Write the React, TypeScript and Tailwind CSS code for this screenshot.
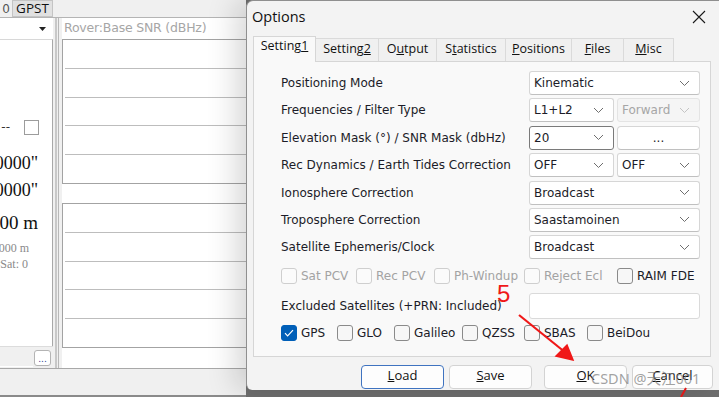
import React from "react";

function Chevron({ light }: { light?: boolean }) {
  return (
    <svg width="11" height="7" viewBox="0 0 11 7" className="shrink-0">
      <path
        d="M1 1l4.5 4.5L10 1"
        fill="none"
        stroke={light ? "#c4c4c4" : "#6e6e6e"}
        strokeWidth="1"
      />
    </svg>
  );
}

function Combo({
  value,
  width,
  disabled,
  focused,
}: {
  value: string;
  width: string;
  disabled?: boolean;
  focused?: boolean;
}) {
  return (
    <div
      className={`${width} h-[24px] flex items-center justify-between pl-[4px] pr-[9px] rounded-[3px] border ${
        disabled
          ? "bg-[#f5f5f5] border-[#e4e4e4] text-[#a6a6a6]"
          : focused
          ? "bg-white border-[#7a7a7a] text-[#1c1c28]"
          : "bg-white border-[#d6d6d6] border-b-[#c0c0c0] text-[#1c1c28]"
      }`}
    >
      <span>{value}</span>
      <Chevron light={disabled} />
    </div>
  );
}

function Check({
  label,
  width,
  disabled,
  checked,
}: {
  label: string;
  width?: string;
  disabled?: boolean;
  checked?: boolean;
}) {
  return (
    <div className={`${width ?? ""} flex items-center gap-[4px] shrink-0`}>
      <div
        className={`w-[16px] h-[16px] rounded-[3px] flex items-center justify-center ${
          checked
            ? "bg-[#005fb8] border border-[#005fb8]"
            : disabled
            ? "bg-[#fbfbfb] border border-[#cfcfcf]"
            : "bg-[#f7f7f7] border border-[#8a8a8a]"
        }`}
      >
        {checked && (
          <svg width="10" height="8" viewBox="0 0 10 8">
            <path d="M1 4.2l2.6 2.6L9 1.2" fill="none" stroke="#fff" strokeWidth="1.2" />
          </svg>
        )}
      </div>
      <span className={disabled ? "text-[#a3a3a3]" : "text-[#1c1c28]"}>{label}</span>
    </div>
  );
}

function Row({ label, children }: { label: string; children: React.ReactNode }) {
  return (
    <div className="h-[24px] flex items-center justify-between">
      <span className="text-[#1c1c28]">{label}</span>
      <div className="w-[171px] flex justify-between">{children}</div>
    </div>
  );
}

function Chart() {
  return (
    <div className="h-[145px] border border-[#a3a3a3] mr-[-4px] px-[2px] flex flex-col">
      <div className="flex-1 border-b border-[#bdbdbd]" />
      <div className="flex-1 border-b border-[#bdbdbd]" />
      <div className="flex-1 border-b border-[#bdbdbd]" />
      <div className="flex-1 border-b border-[#bdbdbd]" />
      <div className="flex-1" />
    </div>
  );
}

export default function App() {
  return (
    <div className="w-[719px] h-[397px] relative overflow-hidden bg-[#f0f0f0] flex flex-col font-['DejaVu_Sans',sans-serif]">
      {/* background app window */}
      <div className="h-[18px] flex items-start border-b border-[#b4b4b4]">
        <div className="w-[10px] h-[16px] flex justify-end overflow-hidden text-[12px] text-[#555]">
          <span>0</span>
        </div>
        <div className="ml-[2px] w-[41px] h-[17px] bg-[#e1e1e1] border border-[#c4c4c4] flex items-center justify-center font-['Open_Sans',sans-serif] text-[13.5px] text-[#111] leading-none">
          GPST
        </div>
      </div>

      <div className="flex-1 flex min-h-0">
        {/* left panel */}
        <div className="w-[53px] flex flex-col">
          <div className="h-[21px] bg-white flex items-center justify-end pr-[7px]">
            <svg width="7" height="4" viewBox="0 0 7 4">
              <path d="M0 0h7L3.5 4z" fill="#222" />
            </svg>
          </div>
          <div className="flex-1 bg-white border-r border-[#a8a8a8] border-t border-t-[#d8d8d8] flex flex-col">
            <div className="h-[79px]" />
            <div className="h-[16px] flex items-center justify-end pr-[13px] overflow-hidden text-[12px] text-[#333]">
              <span className="whitespace-nowrap mr-[14px]">--</span>
              <div className="w-[15px] h-[15px] shrink-0 border border-[#9c9c9c] bg-white" />
            </div>
            <div className="h-[14px]" />
            <div className="h-[28px] flex items-center justify-end pr-[14px] overflow-hidden font-['Liberation_Serif',serif] text-[18px] text-[#111]">
              <span className="whitespace-nowrap">0°00'00.0000"</span>
            </div>
            <div className="h-[27px] flex items-center justify-end pr-[14px] overflow-hidden font-['Liberation_Serif',serif] text-[18px] text-[#111]">
              <span className="whitespace-nowrap">0°00'00.0000"</span>
            </div>
            <div className="h-[33px] flex items-end justify-end pr-[14px] overflow-hidden font-['Liberation_Serif',serif] text-[19px] text-[#111]">
              <span className="whitespace-nowrap">0.000 m</span>
            </div>
            <div className="h-[20px] flex items-end justify-end pr-[23px] overflow-hidden font-['Liberation_Serif',serif] text-[12px] text-[#8a8a8a]">
              <span className="whitespace-nowrap">H: 0.000 m</span>
            </div>
            <div className="h-[14px] flex items-center justify-end pr-[24px] overflow-hidden font-['Liberation_Serif',serif] text-[12px] text-[#8a8a8a]">
              <span className="whitespace-nowrap">Ratio: 0.0 #Sat: 0</span>
            </div>
          </div>
          <div className="h-[22px] flex items-center gap-[1px] border-t border-[#dcdcdc]">
            <div className="w-[33px] h-[19px] bg-[#f0f0f0] border-b border-[#ffffff]" />
            <div className="w-[17px] h-[16px] bg-white border border-[#b4b4b4] rounded-[3px] flex items-end justify-center text-[9px] text-[#2a3b8f] leading-[12px]">
              ...
            </div>
          </div>
        </div>

        {/* splitter */}
        <div className="w-[9px] flex">
          <div className="w-[2px] ml-[2px] border-l border-r border-[#c8c8c8]" />
          <div className="w-[2px] ml-[1px] border-l border-[#b8b8b8]" />
        </div>

        {/* right panel */}
        <div className="flex-1 bg-white flex flex-col">
          <div className="h-[21px] flex items-center pl-[2px] text-[12.5px] text-[#a6a6a6] tracking-[-0.2px]">
            Rover:Base SNR (dBHz)
          </div>
          <Chart />
          <div className="h-[19px]" />
          <Chart />
          <div className="flex-1" />
        </div>
      </div>

      <div className="h-[27px] border-t border-[#a8a8a8] bg-[#f0f0f0]" />
      <div className="h-[2px] bg-[#8a8a8a]" />

      {/* Options dialog window */}
      <div className="absolute left-[246px] top-0 w-[473px] h-[397px] bg-[#6f6f6f]">
        <div className="w-[473px] h-[390px] bg-[#f3f3f3] border-l border-t border-[#8f8f8f] rounded-tl-[7px] rounded-bl-[6px] shadow-[-10px_0_30px_rgba(0,0,0,0.16)] flex flex-col text-[12px]">
          {/* title bar */}
          <div className="h-[35px] flex items-center justify-between pl-[5px] pr-[13px] pb-[3px]">
            <span className="font-['Open_Sans',sans-serif] text-[14.5px] text-[#111]">Options</span>
            <svg width="14" height="14" viewBox="0 0 14 14">
              <path d="M1 1l12 12M13 1L1 13" stroke="#1a1a1a" strokeWidth="1.1" />
            </svg>
          </div>

          {/* tabs */}
          <div className="pl-[6px] h-[25px] flex items-end font-['Open_Sans',sans-serif] text-[12.5px] text-[#111]">
            <div className="w-[63px] h-[26px] bg-[#f9f9f9] border border-b-0 border-[#d6d6d6] flex items-start justify-center relative z-10 mb-[-1px]">
              <span>
                Setting<span className="underline">1</span>
              </span>
            </div>
            <div className="w-[63px] h-[23px] bg-[#f0f0f0] border border-b-0 border-l-0 border-[#dadada] flex items-center justify-center pb-[1px]">
              <span>
                Setting<span className="underline">2</span>
              </span>
            </div>
            <div className="w-[58px] h-[23px] bg-[#f0f0f0] border border-b-0 border-l-0 border-[#dadada] flex items-center justify-center pb-[1px]">
              <span>
                O<span className="underline">u</span>tput
              </span>
            </div>
            <div className="w-[69px] h-[23px] bg-[#f0f0f0] border border-b-0 border-l-0 border-[#dadada] flex items-center justify-center pb-[1px]">
              <span>
                S<span className="underline">t</span>atistics
              </span>
            </div>
            <div className="w-[66px] h-[23px] bg-[#f0f0f0] border border-b-0 border-l-0 border-[#dadada] flex items-center justify-center pb-[1px]">
              <span>
                <span className="underline">P</span>ositions
              </span>
            </div>
            <div className="w-[52px] h-[23px] bg-[#f0f0f0] border border-b-0 border-l-0 border-[#dadada] flex items-center justify-center pb-[1px]">
              <span>
                <span className="underline">F</span>iles
              </span>
            </div>
            <div className="w-[50px] h-[23px] bg-[#f0f0f0] border border-b-0 border-l-0 border-[#dadada] flex items-center justify-center pb-[1px]">
              <span>
                <span className="underline">M</span>isc
              </span>
            </div>
          </div>

          {/* tab page */}
          <div className="ml-[6px] w-[458px] h-[296px] bg-[#f9f9f9] border border-[#d6d6d6] pl-[27px] pr-[10px] pt-[9px] flex flex-col">
            <div className="flex flex-col gap-[3.4px]">
              <Row label="Positioning Mode">
                <Combo value="Kinematic" width="w-[171px]" />
              </Row>
              <Row label="Frequencies / Filter Type">
                <Combo value="L1+L2" width="w-[85px]" />
                <Combo value="Forward" width="w-[83px]" disabled />
              </Row>
              <Row label="Elevation Mask (°) / SNR Mask (dbHz)">
                <Combo value="20" width="w-[85px]" focused />
                <div className="w-[83px] h-[24px] bg-white border border-[#d6d6d6] border-b-[#c0c0c0] rounded-[4px] flex items-center justify-center text-[#1c1c28]">
                  ...
                </div>
              </Row>
              <Row label="Rec Dynamics / Earth Tides Correction">
                <Combo value="OFF" width="w-[85px]" />
                <Combo value="OFF" width="w-[83px]" />
              </Row>
              <Row label="Ionosphere Correction">
                <Combo value="Broadcast" width="w-[171px]" />
              </Row>
              <Row label="Troposphere Correction">
                <Combo value="Saastamoinen" width="w-[171px]" />
              </Row>
              <Row label="Satellite Ephemeris/Clock">
                <Combo value="Broadcast" width="w-[171px]" />
              </Row>
            </div>

            <div className="mt-[8px] h-[17px] flex items-center">
              <Check label="Sat PCV" width="w-[75px]" disabled />
              <Check label="Rec PCV" width="w-[78px]" disabled />
              <Check label="Ph-Windup" width="w-[90px]" disabled />
              <Check label="Reject Ecl" width="w-[93px]" disabled />
              <Check label="RAIM FDE" />
            </div>

            <div className="mt-[9px] h-[26px] flex items-center justify-between">
              <span className="text-[#1c1c28]">Excluded Satellites (+PRN: Included)</span>
              <div className="w-[171px] h-[26px] bg-white border border-[#dadada] rounded-[3px]" />
            </div>

            <div className="mt-[5px] h-[17px] flex items-center">
              <Check label="GPS" width="w-[56px]" checked />
              <Check label="GLO" width="w-[57px]" />
              <Check label="Galileo" width="w-[68px]" />
              <Check label="QZSS" width="w-[62px]" />
              <Check label="SBAS" width="w-[63px]" />
              <Check label="BeiDou" />
            </div>
          </div>

          {/* buttons */}
          <div className="mt-[8px] pl-[114px] flex items-center font-['Open_Sans',sans-serif] text-[13px] text-[#111]">
            <div className="w-[83px] h-[24px] bg-[#fdfdfd] border border-[#3f73c0] rounded-[4px] flex items-center justify-center pb-[2px]">
              <span>
                <span className="underline">L</span>oad
              </span>
            </div>
            <div className="ml-[5px] w-[83px] h-[24px] bg-[#fdfdfd] border border-[#d3d3d3] rounded-[4px] flex items-center justify-center pb-[2px]">
              <span>
                <span className="underline">S</span>ave
              </span>
            </div>
            <div className="ml-[12px] w-[83px] h-[24px] bg-[#fdfdfd] border border-[#d3d3d3] rounded-[4px] flex items-center justify-center pb-[2px]">
              <span>
                <span className="underline">O</span>K
              </span>
            </div>
            <div className="ml-[5px] w-[81px] h-[24px] bg-[#fdfdfd] border border-[#d3d3d3] rounded-[4px] flex items-center justify-center pb-[2px]">
              <span>
                <span className="underline">C</span>ancel
              </span>
            </div>
          </div>
        </div>
      </div>

      {/* red annotation */}
      <div className="absolute left-[497px] top-[282px] font-['Liberation_Sans',sans-serif] text-[24px] leading-none text-[#f01818]">
        5
      </div>
      <svg className="absolute left-0 top-0 pointer-events-none" width="719" height="397" viewBox="0 0 719 397">
        <path d="M519 315L566 353" stroke="#f01818" strokeWidth="2.2" />
        <path d="M573 360L556 356L567 345z" fill="#f01818" stroke="#f01818" strokeWidth="1.5" />
        <path d="M686 388L681 397" stroke="#e01818" strokeWidth="2" />
      </svg>

      {/* watermark */}
      <div className="absolute left-[591px] top-[371px] font-['Noto_Sans','Noto_Sans_CJK_SC',sans-serif] text-[14.5px] leading-none text-[#7a7a7a]/70 whitespace-nowrap">
        CSDN @天江001
      </div>
    </div>
  );
}
